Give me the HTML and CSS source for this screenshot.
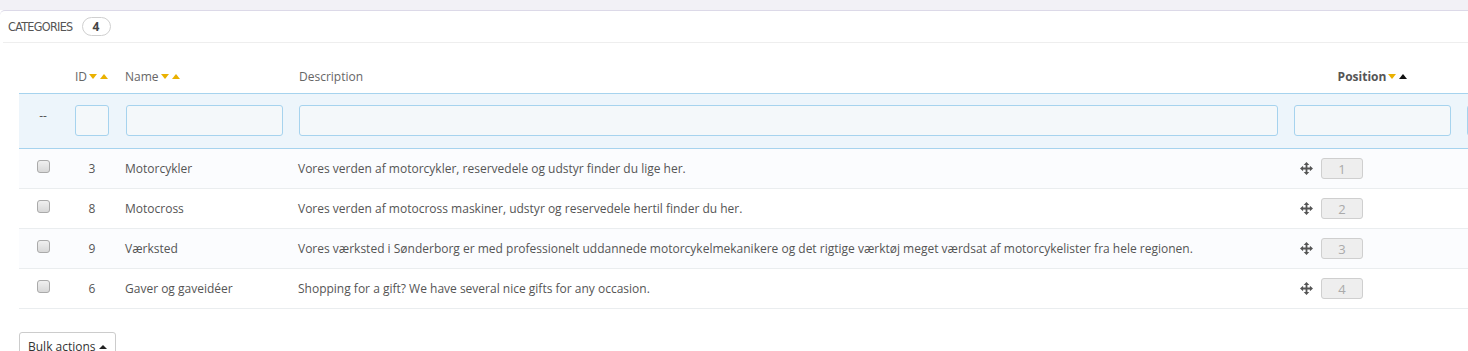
FILE: index.html
```html
<!DOCTYPE html>
<html>
<head>
<meta charset="utf-8">
<link rel="stylesheet" href="styles.css">
</head>
<body>
<div class="topband"></div>
<div class="panel">
  <div class="panel-heading">
    <span class="title">Categories</span>
    <span class="badge">4</span>
  </div>
  <div class="panel-body">
    <table class="list">
      <colgroup>
        <col class="c-check"><col class="c-id"><col class="c-name"><col class="c-desc"><col class="c-pos"><col class="c-act">
      </colgroup>
      <thead>
        <tr class="head">
          <th></th>
          <th class="left"><span>ID</span><i class="down"></i><i class="up"></i></th>
          <th class="left"><span>Name</span><i class="down"></i><i class="up"></i></th>
          <th class="left"><span>Description</span></th>
          <th class="center strong"><span>Position</span><i class="down"></i><i class="up active"></i></th>
          <th></th>
        </tr>
        <tr class="filter">
          <td class="center"><span class="dash">--</span></td>
          <td><div class="input"></div></td>
          <td class="name"><div class="input"></div></td>
          <td><div class="input"></div></td>
          <td><div class="input"></div></td>
          <td><div class="input"></div></td>
        </tr>
      </thead>
      <tbody>
        <tr class="odd">
          <td class="center"><span class="cb"></span></td>
          <td class="center">3</td>
          <td>Motorcykler</td>
          <td class="desc">Vores verden af motorcykler, reservedele og udstyr finder du lige her.</td>
          <td><div class="pos"><svg class="move" viewBox="0 0 13 13" width="13" height="13"><path d="M6.5 2V11M2 6.5H11" stroke="#555" stroke-width="1.8"/><path d="M6.5 0L9.3 3.1H3.7Z M6.5 13L9.3 9.9H3.7Z M0 6.5L3.1 3.7V9.3Z M13 6.5L9.9 3.7V9.3Z" fill="#555"/></svg><span class="posbox">1</span></div></td>
          <td></td>
        </tr>
        <tr>
          <td class="center"><span class="cb"></span></td>
          <td class="center">8</td>
          <td>Motocross</td>
          <td class="desc">Vores verden af motocross maskiner, udstyr og reservedele hertil finder du her.</td>
          <td><div class="pos"><svg class="move" viewBox="0 0 13 13" width="13" height="13"><path d="M6.5 2V11M2 6.5H11" stroke="#555" stroke-width="1.8"/><path d="M6.5 0L9.3 3.1H3.7Z M6.5 13L9.3 9.9H3.7Z M0 6.5L3.1 3.7V9.3Z M13 6.5L9.9 3.7V9.3Z" fill="#555"/></svg><span class="posbox">2</span></div></td>
          <td></td>
        </tr>
        <tr class="odd">
          <td class="center"><span class="cb"></span></td>
          <td class="center">9</td>
          <td>Værksted</td>
          <td class="desc">Vores værksted i Sønderborg er med professionelt uddannede motorcykelmekanikere og det rigtige værktøj meget værdsat af motorcykelister fra hele regionen.</td>
          <td><div class="pos"><svg class="move" viewBox="0 0 13 13" width="13" height="13"><path d="M6.5 2V11M2 6.5H11" stroke="#555" stroke-width="1.8"/><path d="M6.5 0L9.3 3.1H3.7Z M6.5 13L9.3 9.9H3.7Z M0 6.5L3.1 3.7V9.3Z M13 6.5L9.9 3.7V9.3Z" fill="#555"/></svg><span class="posbox">3</span></div></td>
          <td></td>
        </tr>
        <tr>
          <td class="center"><span class="cb"></span></td>
          <td class="center">6</td>
          <td>Gaver og gaveidéer</td>
          <td class="desc">Shopping for a gift? We have several nice gifts for any occasion.</td>
          <td><div class="pos"><svg class="move" viewBox="0 0 13 13" width="13" height="13"><path d="M6.5 2V11M2 6.5H11" stroke="#555" stroke-width="1.8"/><path d="M6.5 0L9.3 3.1H3.7Z M6.5 13L9.3 9.9H3.7Z M0 6.5L3.1 3.7V9.3Z M13 6.5L9.9 3.7V9.3Z" fill="#555"/></svg><span class="posbox">4</span></div></td>
          <td></td>
        </tr>
      </tbody>
    </table>
    <div class="footer">
      <button class="bulk">Bulk actions <i class="caret"></i></button>
    </div>
  </div>
</div>
</body>
</html>
```

FILE: styles.css
```css
html, body {
  margin: 0;
  padding: 0;
  background: #ffffff;
  overflow: hidden;
  font-family: "Open Sans", "Liberation Sans", sans-serif;
  font-size: 12px;
  color: #555;
}
.topband {
  height: 10px;
  background: #f2f1f6;
}
.panel {
  width: 1640px;
  border-top: 1px solid #dcd9e8;
  border-top-left-radius: 5px;
  background: #fff;
  height: 400px;
}
.panel-heading {
  margin-left: 3px;
  padding-left: 5px;
  height: 31px;
  border-bottom: 1px solid #eeeeee;
  display: flex;
  align-items: center;
  gap: 9px;
}
.title {
  font-family: "DejaVu Sans Condensed", "DejaVu Sans", sans-serif;
  font-stretch: condensed;
  text-transform: uppercase;
  font-size: 12.5px;
  color: #555;
  letter-spacing: -0.7px;
}
.badge {
  display: inline-flex;
  align-items: center;
  justify-content: center;
  width: 27px;
  height: 17px;
  border: 1px solid #d0d0d0;
  border-radius: 10px;
  font-weight: bold;
  font-size: 12px;
  color: #444;
}
.panel-body {
  padding-left: 19px;
  padding-top: 16px;
}
table.list {
  border-collapse: collapse;
  table-layout: fixed;
  width: 1560px;
}
col.c-check { width: 48px; }
col.c-id { width: 50px; }
col.c-name { width: 174px; }
col.c-desc { width: 995px; }
col.c-pos { width: 173px; }
col.c-act { width: 120px; }
th, td {
  padding: 0 8px;
  text-align: left;
  white-space: nowrap;
  overflow: hidden;
}
th.left, td.left { text-align: left; }
.center { text-align: center; }
tr.head th {
  height: 34px;
  font-weight: normal;
  color: #666;
  font-size: 12px;
  vertical-align: middle;
}
tr.head th.strong {
  font-weight: bold;
  color: #555;
}
th i.down, th i.up {
  display: inline-block;
  width: 0;
  height: 0;
  border-left: 4px solid transparent;
  border-right: 4px solid transparent;
  vertical-align: middle;
  position: relative;
  top: -1px;
}
th i.down {
  border-top: 5px solid #eab100;
  margin-left: 2px;
}
th i.up {
  border-bottom: 5px solid #eab100;
  margin-left: 3px;
}
th i.up.active {
  border-bottom-color: #111;
}
tr.filter td {
  background: #edf5fb;
  border-top: 1px solid #a6d3ee;
  border-bottom: 1px solid #a6d3ee;
  height: 54px;
  padding-top: 0;
  padding-bottom: 0;
  vertical-align: middle;
}
tr.filter td.name { padding-left: 9px; }
.dash {
  position: relative;
  top: -6px;
  color: #555;
}
.input {
  height: 29px;
  border: 1px solid #a6d3ee;
  border-radius: 3px;
  background: #f4f8fa;
  margin-top: -2px;
}
tbody td {
  height: 39px;
  border-bottom: 1px solid #eaedef;
  vertical-align: middle;
  color: #555;
  font-size: 12px;
}
tbody td.desc { padding-left: 7px; }
tbody tr.odd td {
  background: #fbfcfe;
}
.cb {
  display: inline-block;
  width: 11px;
  height: 11px;
  border: 1px solid #aaa;
  border-radius: 3px;
  background: linear-gradient(#f0f0f0, #d8d8d8);
  vertical-align: middle;
  position: relative;
  top: -3px;
}
.pos {
  display: flex;
  align-items: center;
  padding-left: 6px;
  gap: 8px;
}
.move { display: block; }
.posbox {
  display: inline-flex;
  align-items: center;
  justify-content: center;
  width: 40px;
  height: 19px;
  background: #eeeeee;
  border: 1px solid #cfcfcf;
  border-radius: 3px;
  color: #aaa;
  font-size: 13px;
  box-sizing: content-box;
}
.footer {
  padding-top: 23px;
}
.bulk {
  font-family: "Open Sans", "Liberation Sans", sans-serif;
  font-size: 12px;
  color: #333;
  background: #fff;
  border: 1px solid #ccc;
  border-radius: 3px;
  height: 30px;
  width: 97px;
  padding: 0 0 0 8px;
  text-align: left;
  line-height: 28px;
}
.caret {
  display: inline-block;
  width: 0;
  height: 0;
  border-left: 4px solid transparent;
  border-right: 4px solid transparent;
  border-bottom: 4px solid #222;
  vertical-align: middle;
  position: relative;
  top: -1px;
}
```
